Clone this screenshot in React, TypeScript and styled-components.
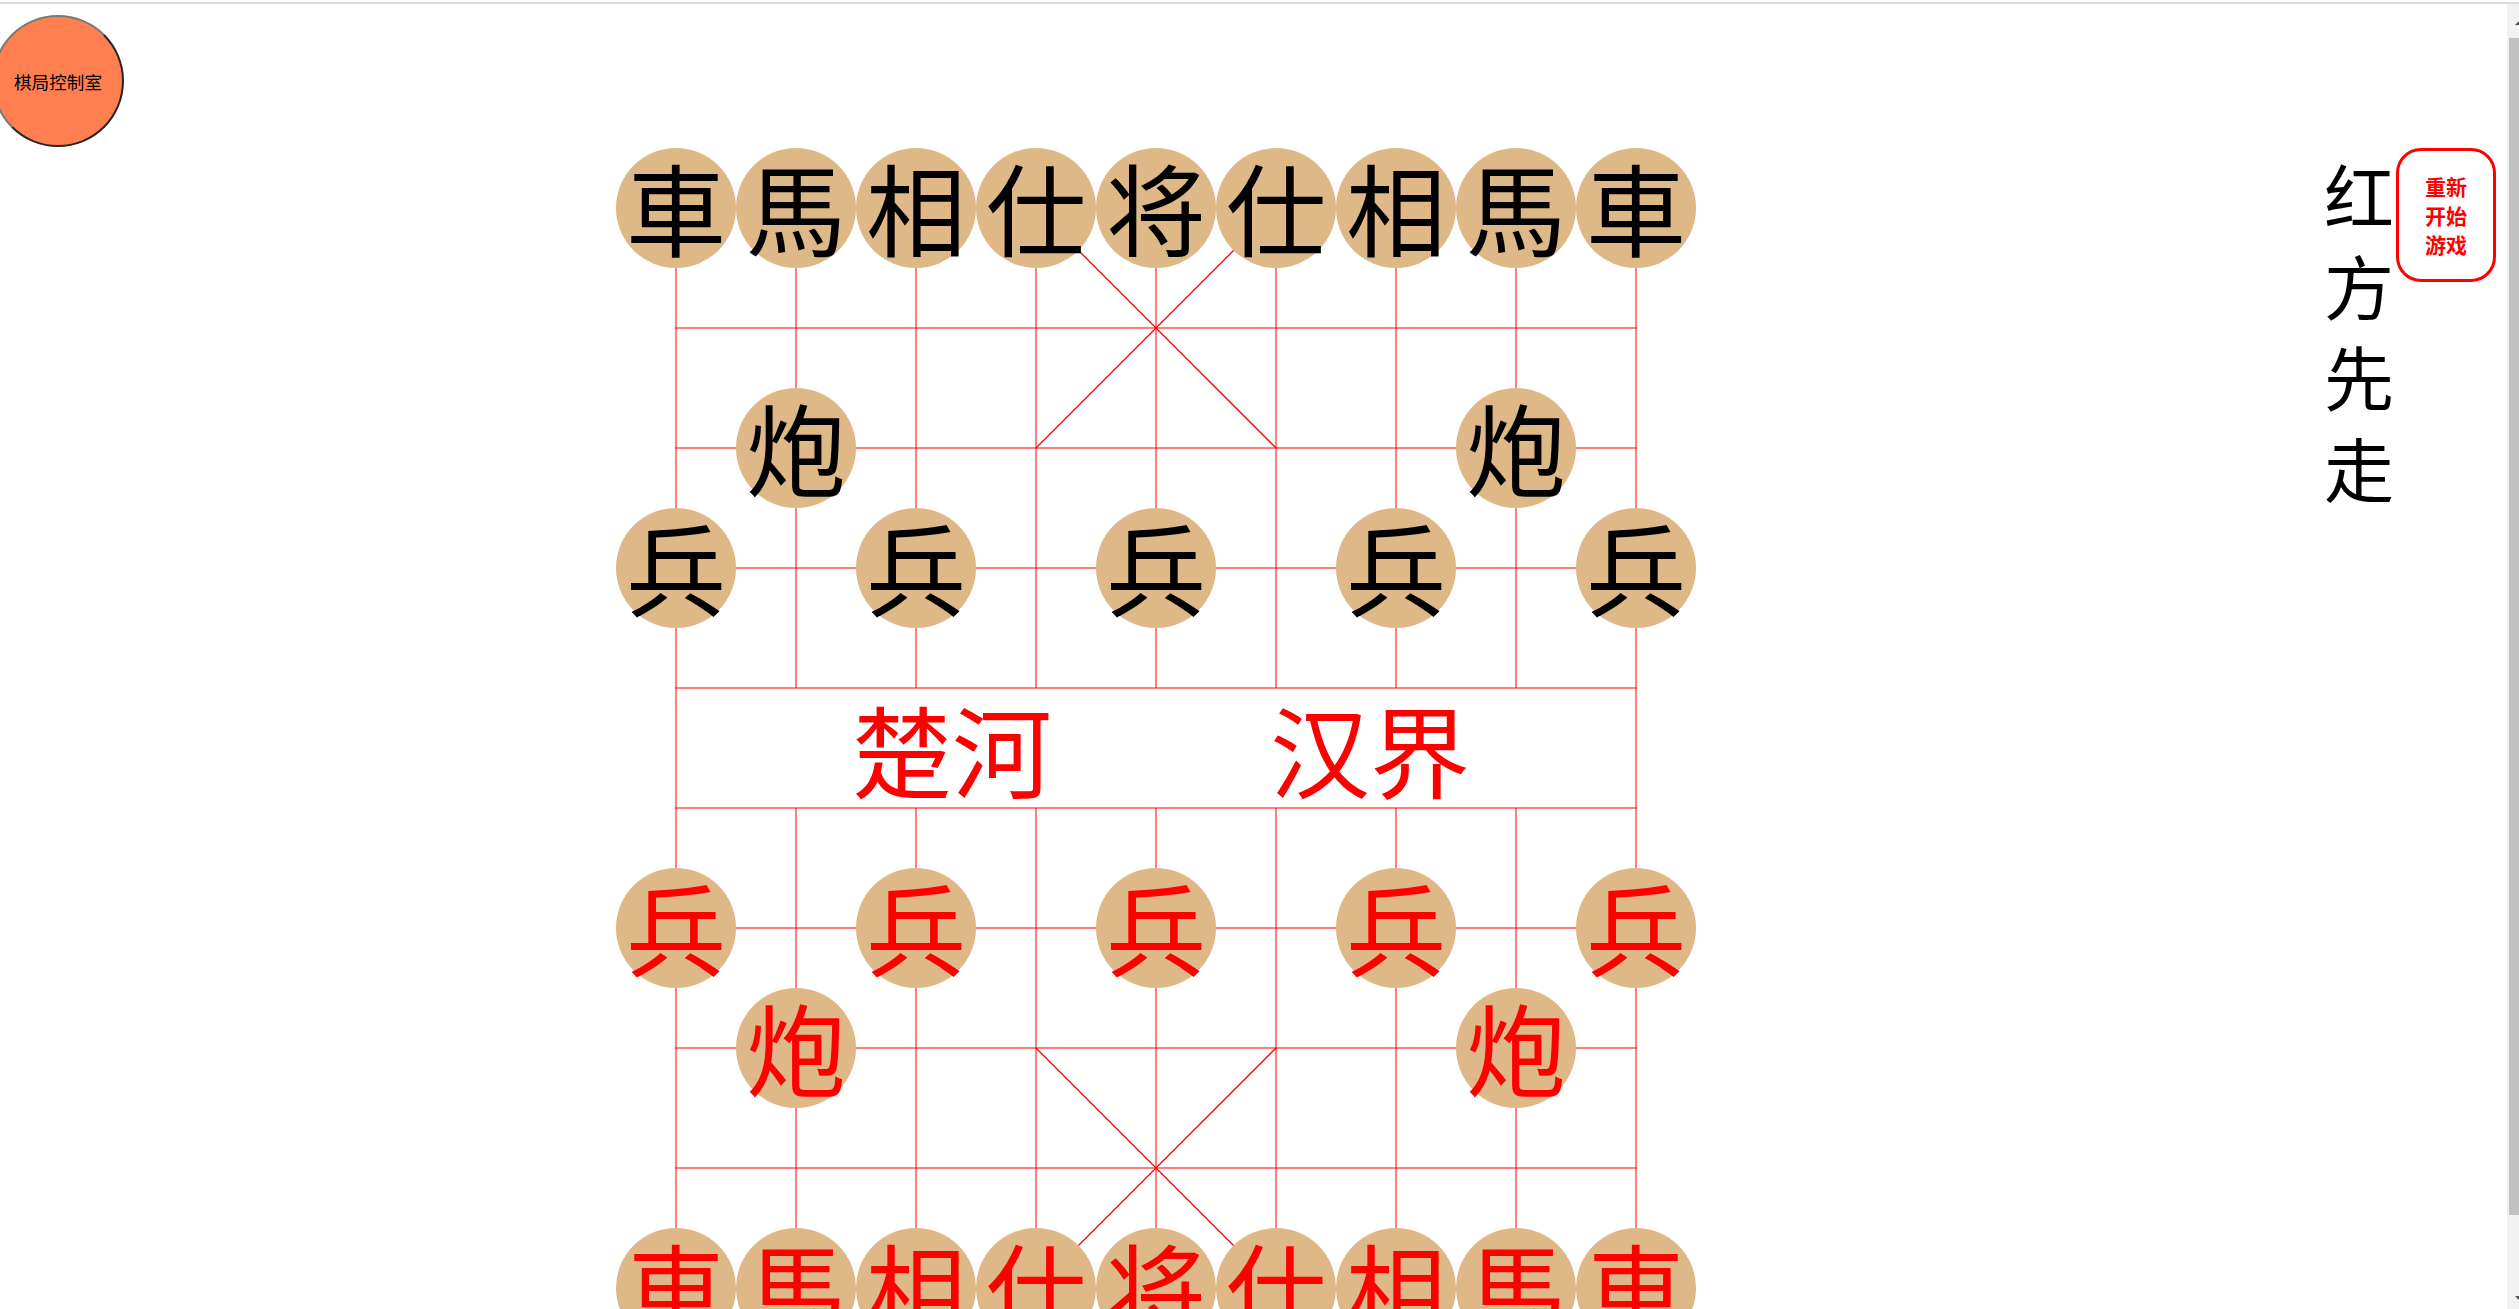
import React from 'react';
import styled, { createGlobalStyle } from 'styled-components';

const FONT = `"Noto Sans CJK SC", "Noto Sans", sans-serif`;

const GlobalStyle = createGlobalStyle`
  html, body {
    margin: 0;
    padding: 0;
    height: 100%;
    overflow: hidden;
    background: #ffffff;
  }
  body {
    font-family: ${FONT};
  }
`;

const Page = styled.div`
  position: relative;
  box-sizing: border-box;
  width: 100%;
  display: flex;
  align-items: flex-start;
  padding: 148px 23px 0 616px;
`;

const TopRule = styled.div`
  position: fixed;
  top: 2px;
  left: 0;
  right: 0;
  height: 2px;
  background: #dddbe2;
  z-index: 5;
`;

const ControlButton = styled.button`
  position: absolute;
  top: 15px;
  left: -8px;
  box-sizing: border-box;
  width: 132px;
  height: 132px;
  border-radius: 50%;
  border: 2px solid;
  border-color: #7a7a7a #262626 #262626 #7a7a7a;
  background: #ff7f50;
  color: #000;
  font-family: ${FONT};
  font-size: 17.6px;
  padding: 0;
  cursor: pointer;
`;

const Board = styled.div`
  position: relative;
  flex: none;
  width: 1080px;
  height: 1200px;
  display: grid;
  grid-template-columns: repeat(9, 120px);
  grid-template-rows: repeat(10, 120px);
`;

const BoardLines = styled.svg`
  position: absolute;
  left: 0;
  top: 0;
  width: 1080px;
  height: 1200px;
  z-index: 0;
`;

const Cell = styled.div`
  position: relative;
  z-index: 1;
  width: 120px;
  height: 120px;
`;

const Piece = styled.div<{ $side: 'red' | 'black' }>`
  width: 120px;
  height: 120px;
  border-radius: 50%;
  background: #deb887;
  color: ${(p) => (p.$side === 'red' ? '#ff0000' : '#000000')};
  font-family: ${FONT};
  font-size: 100px;
  line-height: 116px;
  text-align: center;
  user-select: none;
`;

const River = styled.div`
  position: relative;
  z-index: 1;
  grid-column: 1 / -1;
  grid-row: 5 / span 2;
  display: flex;
  align-items: center;
  justify-content: center;
  gap: 218px;
  padding-left: 10px;
  color: #ff0000;
  font-family: ${FONT};
  font-size: 100px;
  line-height: 1;
`;

const SidePanel = styled.div`
  margin-left: auto;
  display: flex;
  align-items: flex-start;
  gap: 2px;
`;

const TurnText = styled.div`
  width: 70px;
  font-family: ${FONT};
  font-size: 70px;
  line-height: 91px;
  color: #000;
`;

const RestartButton = styled.button`
  box-sizing: border-box;
  width: 100px;
  height: 134px;
  border: 3px solid #ff0000;
  border-radius: 25px;
  background: #ffffff;
  color: #ff0000;
  font-family: ${FONT};
  font-weight: 700;
  font-size: 21px;
  line-height: 29px;
  padding: 0 25px;
  cursor: pointer;
`;

const ScrollTrack = styled.div`
  position: fixed;
  top: 4px;
  right: 0;
  bottom: 0;
  width: 12px;
  background: #f1f1f1;
  z-index: 6;
`;

const ScrollThumb = styled.div`
  position: absolute;
  top: 34px;
  left: 2px;
  right: 0;
  height: 1177px;
  background: #c1c1c1;
`;

const ScrollArrow = styled.div<{ $dir: 'up' | 'down' }>`
  position: absolute;
  left: 8px;
  width: 0;
  height: 0;
  border-left: 4px solid transparent;
  border-right: 4px solid transparent;
  ${(p) =>
    p.$dir === 'up'
      ? `top: 17px; border-bottom: 4px solid #505050;`
      : `bottom: 9px; border-top: 4px solid #505050;`}
`;

type Side = 'red' | 'black';
type Slot = { ch: string; side: Side } | null;

const back = ['車', '馬', '相', '仕', '将', '仕', '相', '馬', '車'];

function makeRow(side: Side, kind: 'back' | 'cannon' | 'pawn' | 'empty'): Slot[] {
  return Array.from({ length: 9 }, (_, i) => {
    if (kind === 'back') return { ch: back[i], side };
    if (kind === 'cannon') return i === 1 || i === 7 ? { ch: '炮', side } : null;
    if (kind === 'pawn') return i % 2 === 0 ? { ch: '兵', side } : null;
    return null;
  });
}

const topRows: Slot[][] = [
  makeRow('black', 'back'),
  makeRow('black', 'empty'),
  makeRow('black', 'cannon'),
  makeRow('black', 'pawn'),
];

const bottomRows: Slot[][] = [
  makeRow('red', 'pawn'),
  makeRow('red', 'cannon'),
  makeRow('red', 'empty'),
  makeRow('red', 'back'),
];

const GRID = 'rgba(255,0,0,0.5)';

function Lines() {
  const verticals: React.ReactNode[] = [];
  for (let i = 0; i < 9; i++) {
    const x = 60 + i * 120;
    if (i === 0 || i === 8) {
      verticals.push(<line key={`v${i}`} x1={x} y1={60} x2={x} y2={1140} stroke={GRID} strokeWidth={2} />);
    } else {
      verticals.push(<line key={`vt${i}`} x1={x} y1={60} x2={x} y2={540} stroke={GRID} strokeWidth={2} />);
      verticals.push(<line key={`vb${i}`} x1={x} y1={660} x2={x} y2={1140} stroke={GRID} strokeWidth={2} />);
    }
  }
  const horizontals = Array.from({ length: 10 }, (_, j) => {
    const y = 60 + j * 120;
    return <line key={`h${j}`} x1={59} y1={y} x2={1021} y2={y} stroke={GRID} strokeWidth={2} />;
  });
  return (
    <BoardLines viewBox="0 0 1080 1200">
      {verticals}
      {horizontals}
      <line x1={420} y1={60} x2={660} y2={300} stroke="#ff0000" strokeWidth={1.3} />
      <line x1={660} y1={60} x2={420} y2={300} stroke="#ff0000" strokeWidth={1.3} />
      <line x1={420} y1={900} x2={660} y2={1140} stroke="#ff0000" strokeWidth={1.3} />
      <line x1={660} y1={900} x2={420} y2={1140} stroke="#ff0000" strokeWidth={1.3} />
    </BoardLines>
  );
}

function renderRows(rows: Slot[][], prefix: string) {
  return rows.flatMap((row, r) =>
    row.map((slot, c) => (
      <Cell key={`${prefix}-${r}-${c}`}>
        {slot && <Piece $side={slot.side}>{slot.ch}</Piece>}
      </Cell>
    ))
  );
}

export default function App() {
  return (
    <>
      <GlobalStyle />
      <TopRule />
      <Page>
        <ControlButton>棋局控制室</ControlButton>
        <Board>
          <Lines />
          {renderRows(topRows, 't')}
          <River>
            <span>楚河</span>
            <span>汉界</span>
          </River>
          {renderRows(bottomRows, 'b')}
        </Board>
        <SidePanel>
          <TurnText>红方先走</TurnText>
          <RestartButton>重新开始游戏</RestartButton>
        </SidePanel>
      </Page>
      <ScrollTrack>
        <ScrollArrow $dir="up" />
        <ScrollThumb />
        <ScrollArrow $dir="down" />
      </ScrollTrack>
    </>
  );
}
